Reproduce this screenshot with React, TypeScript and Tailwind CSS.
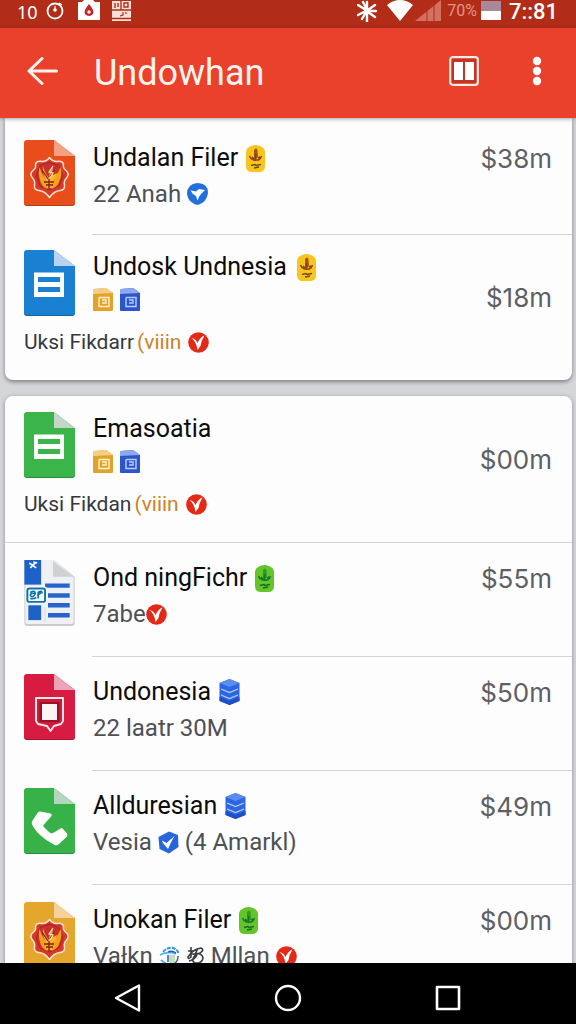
import type { ReactNode } from 'react';

type IconProps = { className?: string };

function Sheet({ color, fold, children }: { color: string; fold: string; children?: ReactNode }) {
  return (
    <svg viewBox="0 0 51 66" className="h-[66px] w-[51px] shrink-0" aria-hidden="true">
      <path d="M3 0H30L51 16V63a3 3 0 0 1-3 3H3a3 3 0 0 1-3-3V3a3 3 0 0 1 3-3Z" fill={color} />
      <path d="M30 0L51 16H30Z" fill={fold} />
      <path d="M0 62.500V63a3 3 0 0 0 3 3H48a3 3 0 0 0 3-3V62.500a3 3 0 0 1-3 2.500H3a3 3 0 0 1-3-2.500Z" fill="#000" opacity=".22" />
      {children}
    </svg>
  );
}

function Crest() {
  return (
    <g>
      <path
        d="M25.500 17.500Q29 22 33 21.500Q38 20.500 39.500 24Q38.500 28 42 30.500Q46 34 42.500 38Q39.500 41 40.500 45.500Q41 50 36 50.500Q30 51 25.500 57.500Q21 51 15 50.500Q10 50 10.500 45.500Q11.500 41 8.500 38Q5 34 9 30.500Q12.500 28 11.500 24Q13 20.500 18 21.500Q22 22 25.500 17.500Z"
        fill="#d8382a"
        stroke="#fbe3cf"
        strokeWidth="1.500"
        strokeLinejoin="round"
      />
      <path d="M25.500 22L35 25.500L39 36L35 46L25.500 50L16 46L12 36L16 25.500Z" fill="#c92f2b" stroke="#a3262a" strokeWidth="1" />
      <path d="M15.500 27q3 9 7 13l1 9q-6-2-7.500-9q-2-7-.5-13Z" fill="#f6a01b" />
      <path d="M36.500 27q2 7-1 14q-2 6-8 8l-1-9q7-4 10-13Z" fill="#f6a01b" />
      <path d="M19 26q2 8 6 12q0-6 4-11q-1 6 0 8l4-2q-1 6-5 8v7h-5l-1-8q-4-6-3-14Z" fill="#f9b52a" />
      <path d="M18 30l6 9M30 30l-4 7M20 42h10M22 45h7M25 39v9" stroke="#7d1f26" strokeWidth="1.300" fill="none" />
      <path d="M29 26l-4 6l4 1l-3 5" stroke="#ffe9d0" strokeWidth="1.200" fill="none" />
    </g>
  );
}

function TwoLines() {
  return (
    <path fillRule="evenodd" d="M10 22.500H40V47H10ZM14 27V32H36V27ZM14 37V42H36V37Z" fill="#fff" />
  );
}

function TableSheet() {
  return (
    <svg viewBox="0 0 51 67" className="h-[66px] w-[51px] shrink-0" aria-hidden="true">
      <path d="M0 0H30L51 17V64a3 3 0 0 1-3 3H3a3 3 0 0 1-3-3Z" fill="#c9cbd0" />
      <path d="M1 0H30L50 17V63a2 2 0 0 1-2 2H3a2 2 0 0 1-2-2Z" fill="#eef0f3" />
      <path d="M29 1L50 17H29Z" fill="#cfd1d4" />
      <path d="M0 0H17V25H0Z" fill="#1c62c8" />
      <path d="M4 46H17V61H4Z" fill="#1c62c8" />
      <path d="M21 26H46M24 36H46M24 46H46M24 56H46" stroke="#2763cf" strokeWidth="4.500" />
      <path d="M21 48V63" stroke="#d6d9de" />
      <path d="M5 3L12 8M6 8L11 3M9 2l4 1" stroke="#fff" strokeWidth="1.700" fill="none" />
      <rect x="1" y="27" width="22" height="17" rx="3" fill="#fff" />
      <rect x="3" y="29" width="18" height="13.500" rx="2" fill="#f5fbff" stroke="#1273a8" strokeWidth="2" />
      <path d="M6 33q5-3 5 1q-5-1-5 2q3 3 5-2M6 39q3 1 6-1M14 39V33q4-3 4 1M13 36l4-3" stroke="#1273a8" strokeWidth="1.700" fill="none" />
    </svg>
  );
}

function PhoneMark() {
  return (
    <path
      d="M16.500 23.500L26.500 25.500Q28.500 26.500 27.500 28L19.500 37Q18.800 38 19.800 39L25 44Q27 46 29 45L36.500 40.500Q38 39.500 39 41L43 45.500Q44 47 43 48.500L35 56Q32 58.500 29 56Q14 48 8.500 37.500Q7 34.500 8.500 32.500L13.500 25Q14.500 23 16.500 23.500Z"
      fill="#fff"
    />
  );
}

function BubbleMark() {
  return (
    <g>
      <path d="M12 24H39V47L37 50L30 52L26.500 57L23 52L14 50L12 47Z" fill="#d01a3b" stroke="#ffe6ea" strokeWidth="2" strokeLinejoin="round" />
      <path d="M15.500 28H35.500V48H15.500Z" fill="#9f1029" />
      <path d="M18 30H33V46H18Z" fill="#fff4f4" />
    </g>
  );
}

function Emblem({ tone }: { tone: 'gold' | 'green' }) {
  const gold = tone === 'gold';
  return (
    <svg viewBox="0 0 19 27" className="h-[27px] w-[19px] shrink-0" aria-hidden="true">
      <path d="M5 1Q9.500-1 14 1Q19 3 19 7V21Q19 27 13 27H6Q0 27 0 21V7Q0 3 5 1Z" fill={gold ? '#f7c51e' : '#63c52a'} />
      <path d="M8 5q2-3 3.500 0l.5 7-2 2H8Z" fill={gold ? '#a4531d' : '#2f9a2b'} />
      <path d="M3.500 11q1 3 4 4h5q2-1 3-4M6 12l2 2M9.500 9v7M12 13l2-1" stroke={gold ? '#8a4316' : '#17752b'} strokeWidth="1.500" fill="none" />
      <path d="M5 20.500l4-1l1 1l5-1M8 23l5-1" stroke={gold ? '#6d4a1a' : '#1b6a2a'} strokeWidth="1.300" fill="none" />
    </svg>
  );
}

function Stack() {
  return (
    <svg viewBox="0 0 21 28" className="h-[28px] w-[21px] shrink-0" aria-hidden="true">
      <path d="M10.500 1L20.500 5V23L10.500 27L.5 23V5Z" fill="#2b66e3" />
      <path d="M.5 19L10.500 23L20.500 19V23L10.500 27L.5 23Z" fill="#1d4fc9" />
      <path d="M10.500 1L20.500 5L10.500 9L.5 5Z" fill="#5b8df0" />
      <path d="M2 11L10.500 14.500L19 11M2 17L10.500 20.500L19 17" stroke="#b9ceff" strokeWidth="1.200" fill="none" />
    </svg>
  );
}

function RedCheck() {
  return (
    <svg viewBox="0 0 21 21" className="size-[21px] shrink-0" aria-hidden="true">
      <circle cx="10.500" cy="10.500" r="10.300" fill="#e42a17" />
      <path d="M3.500 6Q8 7 9.500 11Q12 5 16.500 3.500Q13 9 12.500 14L9.500 18Q8.500 10 3.500 6Z" fill="#fff" />
    </svg>
  );
}

function BlueBird() {
  return (
    <svg viewBox="0 0 21 22" className="h-[22px] w-[21px] shrink-0" aria-hidden="true">
      <path d="M10.500 0Q21 0 21 10Q20 19 11 22Q1 20 0 11Q0 1 10.500 0Z" fill="#2370dd" />
      <path d="M3.500 7.500L9 8.500L12 6L18 7L14.500 10.500L12.500 13L10.500 17.500L9 13Q5 11 3.500 7.500Z" fill="#fff" />
    </svg>
  );
}

function BlueShield() {
  return (
    <svg viewBox="0 0 21 23" className="h-[23px] w-[21px] shrink-0" aria-hidden="true">
      <path d="M11 .5L20 4L20.500 16L11 22.500L1.500 18L.5 6Z" fill="#2666dc" />
      <path d="M4 9.500L8.500 12L16.500 5Q13 11 10 18L5 12Z" fill="#fff" />
    </svg>
  );
}

function Chip({ tone }: { tone: 'amber' | 'blue' }) {
  const amber = tone === 'amber';
  return (
    <svg viewBox="0 0 20 23" className="h-[23px] w-[20px]" aria-hidden="true">
      <path d="M1 1L13 0L20 5V22a1 1 0 0 1-1 1H1a1 1 0 0 1-1-1V2Z" fill={amber ? '#e3a329' : '#2c55cc'} />
      <path d="M1 1L13 0L20 5L0 6V2Z" fill={amber ? '#f4ce86' : '#8ca8ef'} />
      <path d="M6 9.500H16V18.500H6V9.500M9 12H13V15H9" stroke={amber ? '#fff3cf' : '#b9cfff'} strokeWidth="1.400" fill="none" />
    </svg>
  );
}

function Globe() {
  return (
    <svg viewBox="0 0 22 20" className="h-[20px] w-[22px] shrink-0" aria-hidden="true">
      <path d="M4 6Q8 1 14 2Q18 3 20 8" stroke="#2f9ad6" strokeWidth="2" strokeDasharray="4 1" fill="none" />
      <path d="M1 9q8-4 16-1M2 14q5 5 11 4" stroke="#58b5df" strokeWidth="1.800" fill="none" />
      <path d="M10 9h6v8h-6Z" fill="#bfe3b8" />
      <path d="M9 6q4-2 8 1M9 16V9M19 10q0 5-3 7" stroke="#2f58c4" strokeWidth="1.500" fill="none" />
    </svg>
  );
}

function Knot() {
  return (
    <svg viewBox="0 0 18 20" className="h-[20px] w-[18px] shrink-0" aria-hidden="true">
      <path d="M1 5h6M4 1v10q-3 3-3 0q5-8 13-9q4 2-1 5q-4 2-7 1q9-2 10 4q-1 6-8 5q-4-2-1-6l4-9M2 15q5-1 8-6" stroke="#3b3e42" strokeWidth="1.600" fill="none" />
    </svg>
  );
}

function WifiIcon({ className }: IconProps) {
  return (
    <svg viewBox="0 0 26 21" className={className} aria-hidden="true">
      <path d="M0 5Q6 0 13 0T26 5L13 21Z" fill="#fff" />
    </svg>
  );
}

function Price({ children, low }: { children: ReactNode; low?: boolean }) {
  return (
    <span className={`ml-auto font-['Inter',sans-serif] text-[26px] leading-[36px] text-[#5d6063] ${low ? 'self-end' : 'pt-0.5'}`}>
      {children}
    </span>
  );
}

type RowProps = {
  icon: ReactNode;
  title: string;
  badge?: ReactNode;
  price: string;
  sub: ReactNode;
};

function Row({ icon, title, badge, price, sub }: RowProps) {
  return (
    <li className="flex min-h-[114px] pl-[19px] pr-5 pt-[18px] first:min-h-[116px] first:pt-[22px]">
      {icon}
      <div className="ml-[18px] flex flex-1 flex-col">
        <div className="flex h-9 items-center">
          <h2 className="mr-2 whitespace-nowrap text-[25px] leading-[36px]">{title}</h2>
          {badge}
          <Price>{price}</Price>
        </div>
        <div className="flex items-center gap-1.5 whitespace-nowrap text-[24px] leading-[36px] text-[#4d5054]">{sub}</div>
      </div>
    </li>
  );
}

function WideRow({ icon, title, badge, price, sub }: RowProps) {
  return (
    <li className="min-h-[146px] pl-[19px] pr-5 pt-4">
      <div className="flex">
        {icon}
        <div className="ml-[18px]">
          <div className="flex items-center gap-2.5">
            <h2 className="whitespace-nowrap text-[25px] leading-[34px]">{title}</h2>
            {badge}
          </div>
          <div className="mt-1 flex gap-[7px]">
            <Chip tone="amber" />
            <Chip tone="blue" />
          </div>
        </div>
        <Price low>{price}</Price>
      </div>
      <p className="mt-2.5 flex items-center gap-[3px] whitespace-nowrap text-[21px] leading-[32px] text-[#36383b]">
        {sub}
        <span className="mr-1 text-[#cf8226]">(viiin</span>
        <RedCheck />
      </p>
    </li>
  );
}

function Divider({ full }: { full?: boolean }) {
  return <li aria-hidden="true" className={`-mb-px h-px bg-[#d3d4d8] ${full ? '' : 'ml-[87px]'}`} />;
}

export default function App() {
  return (
    <div className="flex h-screen flex-col overflow-hidden bg-[#d5d6da] font-['Roboto',sans-serif] text-[#0c0c0d]">
      <div className="flex h-7 shrink-0 items-start bg-[#b12d18] pl-[17px] pr-[18px] text-white">
        <span className="font-['Noto_Sans',sans-serif] text-[18px] leading-[24px]">10</span>
        <svg viewBox="0 0 18 20" className="ml-2 h-5 w-[18px]" aria-hidden="true">
          <circle cx="9" cy="11" r="7.500" fill="none" stroke="#fff" strokeWidth="1.800" />
          <circle cx="9" cy="10" r="1.800" fill="#fff" />
          <path d="M9 10V6M13 3l3 2" stroke="#fff" strokeWidth="1.200" />
        </svg>
        <svg viewBox="0 0 22 20" className="ml-3.5 h-5 w-[22px]" aria-hidden="true">
          <path d="M0 2H4L6 0H15L17 2H22V20H0Z" fill="#fff" />
          <path d="M11 4Q17 11 15 14Q11 18 7 14Q5 11 11 4Z" fill="#c4242a" />
          <circle cx="11" cy="12" r="1.700" fill="#fff" />
        </svg>
        <svg viewBox="0 0 19 21" className="ml-3 h-[21px] w-[19px]" aria-hidden="true">
          <path d="M0 1H19V21H0Z" fill="#f8e0d9" />
          <path d="M0 10H19M9 1V10M3 3v5M12 3h4v4h-4ZM6 3v4M0 18.500H19" stroke="#b12d18" strokeWidth="1.400" fill="none" />
          <path d="M8 16l3-1v-3M14 12v2" stroke="#b12d18" strokeWidth="1.200" fill="none" />
        </svg>
        <div className="ml-auto flex items-start">
          <svg viewBox="0 0 20 22" className="h-[22px] w-5" aria-hidden="true">
            <path d="M10 2V9M10 13V22M1 5L9 10M1 15L9 11M11 10L18 5M12 11H19M11 12L18 17M6 2L10 10M5 19L9 12" stroke="#fff" strokeWidth="2.400" strokeLinecap="round" fill="none" />
          </svg>
          <WifiIcon className="ml-2.5 h-[21px] w-[26px]" />
          <svg viewBox="0 0 26 21" className="ml-0.5 h-[21px] w-[26px]" aria-hidden="true">
            <path d="M0 21L26 0V21Z" fill="#d4705f" />
            <path d="M12 11V21M19 5V21" stroke="#b12d18" strokeWidth="1" />
          </svg>
          <span className="ml-1.5 text-[16px] leading-[22px] text-[#e39587]">70%</span>
          <svg viewBox="0 0 20 20" className="ml-1 h-5 w-5" aria-hidden="true">
            <path d="M0 1H20V11H0Z" fill="#a8899a" />
            <path d="M0 11H20V20H0Z" fill="#fff" />
          </svg>
          <span className="ml-2 text-[22px] font-medium leading-[24px]">7::81</span>
        </div>
      </div>

      <header className="z-10 flex h-[90px] shrink-0 items-center bg-[#e9412c] pb-1 pl-[27px] pr-[34px] text-white shadow-[0_1px_4px_rgba(0,0,0,0.35)]">
        <button type="button" aria-label="Back">
          <svg viewBox="0 0 31 28" className="h-7 w-[31px]" fill="none" stroke="#fff3ee" strokeWidth="3" strokeLinecap="round" strokeLinejoin="round">
            <path d="M15 1.500L2 14L15 26.500M2 14H29.500" />
          </svg>
        </button>
        <h1 className="ml-9 pt-1 text-[36px] leading-[40px] text-[#fff3ee]">Undowhan</h1>
        <button type="button" aria-label="View" className="ml-auto">
          <svg viewBox="0 0 30 30" className="size-[30px]">
            <rect x="1.200" y="1.200" width="27.600" height="27.600" rx="2.500" fill="#c53422" stroke="#ffe9e2" strokeWidth="2.200" />
            <path d="M5 6H14V24H5ZM16 6H25V24H16Z" fill="#fff" />
          </svg>
        </button>
        <button type="button" aria-label="More" className="ml-[53px]">
          <svg viewBox="0 0 10 30" className="h-[30px] w-2.5" fill="#fff">
            <circle cx="5" cy="5" r="4.200" />
            <circle cx="5" cy="15" r="4.200" />
            <circle cx="5" cy="25" r="4.200" />
          </svg>
        </button>
      </header>

      <main className="flex flex-1 flex-col gap-4 overflow-hidden pl-[5px] pr-1">
        <ul className="shrink-0 rounded-b-lg bg-[#fdfdfe] shadow-[0_2px_4px_rgba(0,0,0,0.4)]">
          <Row
            icon={<Sheet color="#e84e1b" fold="#f4a083"><Crest /></Sheet>}
            title="Undalan Filer"
            badge={<Emblem tone="gold" />}
            price="$38m"
            sub={<>22 Anah <BlueBird /></>}
          />
          <Divider />
          <WideRow
            icon={<Sheet color="#1a80d2" fold="#b9d3f0"><TwoLines /></Sheet>}
            title="Undosk Undnesia"
            badge={<Emblem tone="gold" />}
            price="$18m"
            sub="Uksi Fikdarr"
          />
        </ul>

        <ul className="shrink-0 rounded-t-lg bg-[#fdfdfe] shadow-[0_1px_4px_rgba(0,0,0,0.35)]">
          <WideRow
            icon={<Sheet color="#3bb54a" fold="#c3d6c8"><TwoLines /></Sheet>}
            title="Emasoatia"
            price="$00m"
            sub="Uksi Fikdan"
          />
          <Divider full />
          <Row
            icon={<TableSheet />}
            title="Ond ningFichr"
            badge={<Emblem tone="green" />}
            price="$55m"
            sub={<span className="flex items-center">7abe<RedCheck /></span>}
          />
          <Divider />
          <Row
            icon={<Sheet color="#d81b40" fold="#eda5b5"><BubbleMark /></Sheet>}
            title="Undonesia"
            badge={<Stack />}
            price="$50m"
            sub="22 laatr 30M"
          />
          <Divider />
          <Row
            icon={<Sheet color="#37b249" fold="#b5d6ba"><PhoneMark /></Sheet>}
            title="Allduresian"
            badge={<Stack />}
            price="$49m"
            sub={<>Vesia <BlueShield /> (4 Amarkl)</>}
          />
          <Divider />
          <Row
            icon={<Sheet color="#e5a62d" fold="#f7d19c"><Crest /></Sheet>}
            title="Unokan Filer"
            badge={<Emblem tone="green" />}
            price="$00m"
            sub={<>Vałkn <Globe /> <Knot /> <span>Mllan</span> <RedCheck /></>}
          />
        </ul>
      </main>

      <nav className="z-10 flex h-[61px] shrink-0 items-center justify-center gap-[132px] bg-black pt-2">
        <button type="button" aria-label="Back">
          <svg viewBox="0 0 28 28" className="size-7" fill="none" stroke="#fff" strokeWidth="2.400" strokeLinejoin="round">
            <path d="M2 14L25 1.500V26.500Z" />
          </svg>
        </button>
        <button type="button" aria-label="Home">
          <svg viewBox="0 0 28 28" className="size-7" fill="none" stroke="#fff" strokeWidth="2.400">
            <circle cx="14" cy="14" r="12" />
          </svg>
        </button>
        <button type="button" aria-label="Recents">
          <svg viewBox="0 0 28 28" className="size-7" fill="none" stroke="#fff" strokeWidth="2.600" strokeLinejoin="round">
            <path d="M3 3H25V25H3Z" />
          </svg>
        </button>
      </nav>
    </div>
  );
}
